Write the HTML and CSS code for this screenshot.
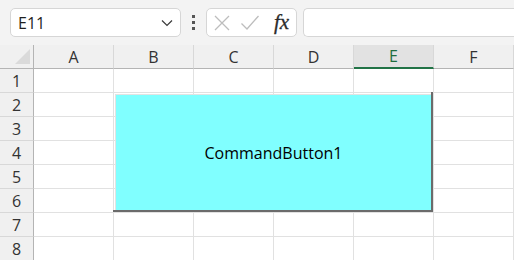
FILE: index.html
```html
<!DOCTYPE html>
<html>
<head>
<meta charset="utf-8">
<link rel="stylesheet" href="styles.css">
</head>
<body>
<div class="toolbar">
  <div class="namebox">
    <span class="ref">E11</span>
    <svg class="chev" width="12" height="8" viewBox="0 0 12 8"><path d="M1 1.5 L6 6.5 L11 1.5" fill="none" stroke="#3a3a3a" stroke-width="1.2"/></svg>
  </div>
  <div class="dots"><i></i><i></i><i></i></div>
  <div class="fbtns">
    <svg width="18" height="18" viewBox="0 0 18 18"><path d="M2 2 L16 16 M16 2 L2 16" stroke="#bdbdbd" stroke-width="1.3" fill="none"/></svg>
    <svg width="20" height="18" viewBox="0 0 20 18"><path d="M1.5 9.5 L7 15 L18.5 2" stroke="#bdbdbd" stroke-width="1.3" fill="none"/></svg>
    <span class="fx">fx</span>
  </div>
  <div class="formula"></div>
</div>
<div class="sheet">
  <div class="grid">
    <div class="corner"><span class="tri"></span></div>
    <div class="ch">A</div><div class="ch">B</div><div class="ch">C</div><div class="ch">D</div><div class="ch sel">E</div><div class="ch">F</div>
    <div class="rh">1</div><div class="c"></div><div class="c"></div><div class="c"></div><div class="c"></div><div class="c"></div><div class="c"></div>
    <div class="rh">2</div><div class="c"></div><div class="c"></div><div class="c"></div><div class="c"></div><div class="c"></div><div class="c"></div>
    <div class="rh">3</div><div class="c"></div><div class="c"></div><div class="c"></div><div class="c"></div><div class="c"></div><div class="c"></div>
    <div class="rh">4</div><div class="c"></div><div class="c"></div><div class="c"></div><div class="c"></div><div class="c"></div><div class="c"></div>
    <div class="rh">5</div><div class="c"></div><div class="c"></div><div class="c"></div><div class="c"></div><div class="c"></div><div class="c"></div>
    <div class="rh">6</div><div class="c"></div><div class="c"></div><div class="c"></div><div class="c"></div><div class="c"></div><div class="c"></div>
    <div class="rh">7</div><div class="c"></div><div class="c"></div><div class="c"></div><div class="c"></div><div class="c"></div><div class="c"></div>
    <div class="rh">8</div><div class="c"></div><div class="c"></div><div class="c"></div><div class="c"></div><div class="c"></div><div class="c"></div>
  </div>
  <div class="cmdbtn"><div class="face">CommandButton1</div></div>
</div>
</body>
</html>
```
FILE: styles.css
```css
* { box-sizing: border-box; }
html, body { margin: 0; padding: 0; }
body {
  width: 514px; height: 260px; overflow: hidden;
  background: #f0f0f0;
  font-family: "Open Sans", "Noto Sans", sans-serif;
  color: #262626;
}
.toolbar {
  height: 45px;
  display: flex;
  align-items: flex-start;
  padding: 8px 0 0 10px;
  background: #f3f3f3;
}
.namebox {
  width: 171px; height: 29px;
  background: #fff;
  border: 1px solid #d6d6d6;
  border-radius: 5px;
  display: flex; align-items: center; justify-content: space-between;
  padding: 0 7px 0 7px;
}
.ref { font-size: 16px; color: #1f1f1f; line-height: 1; }
.chev { margin-top: 1px; }
.dots {
  width: 25px; height: 29px;
  display: flex; flex-direction: column; align-items: center; justify-content: center; gap: 3px;
}
.dots i { display: block; width: 3px; height: 3px; background: #555; }
.fbtns {
  width: 91px; height: 29px;
  background: #fff;
  border: 1px solid #d6d6d6;
  border-radius: 5px;
  display: flex; align-items: center;
  padding: 0 0 0 6px; gap: 9px;
}
.fx {
  font-family: "Liberation Serif", serif; font-style: italic;
  font-size: 21px; color: #2b2b2b; margin-left: 5px; line-height: 1;
  -webkit-text-stroke: 0.3px #2b2b2b;
}
.formula {
  margin-left: 6px;
  flex: 1; height: 29px;
  background: #fff;
  border: 1px solid #d6d6d6;
  border-right: none;
  border-radius: 5px 0 0 5px;
}
.sheet { position: relative; }
.grid {
  display: grid;
  grid-template-columns: 34px repeat(6, 80px);
  grid-auto-rows: 24px;
}
.corner {
  background: #f0f0f0;
  border-right: 1px solid #b4b4b4;
  border-bottom: 1px solid #b4b4b4;
  position: relative;
}
.tri {
  position: absolute; right: 3px; bottom: 4px;
  width: 0; height: 0;
  border-left: 15px solid transparent;
  border-bottom: 15px solid #dadada;
}
.ch {
  background: #f0f0f0;
  border-right: 1px solid #d8d8d8;
  border-bottom: 1px solid #b4b4b4;
  display: flex; align-items: center; justify-content: center;
  font-size: 16px; color: #333;
}
.ch.sel {
  background: #e2e2e2;
  color: #1e6e3f;
  border-bottom: 2px solid #217346;
}
.rh {
  background: #f0f0f0;
  border-right: 1px solid #b4b4b4;
  border-bottom: 1px solid #d8d8d8;
  display: flex; align-items: center; justify-content: center;
  font-size: 16px; color: #333;
}
.c {
  background: #fff;
  border-right: 1px solid #e1e1e1;
  border-bottom: 1px solid #e1e1e1;
}
.cmdbtn {
  position: absolute;
  left: 113px; top: 47px;
  width: 320px; height: 120px;
  border-right: 2px solid #6b6b6b;
  border-bottom: 2px solid #6b6b6b;
  padding: 2px 0 0 2px;
}
.face {
  width: 100%; height: 100%;
  background: #80ffff;
  border-top: 1px solid #e3e3e3;
  border-left: 1px solid #e3e3e3;
  display: flex; align-items: center; justify-content: center;
  font-size: 16px; color: #000;
}
```
